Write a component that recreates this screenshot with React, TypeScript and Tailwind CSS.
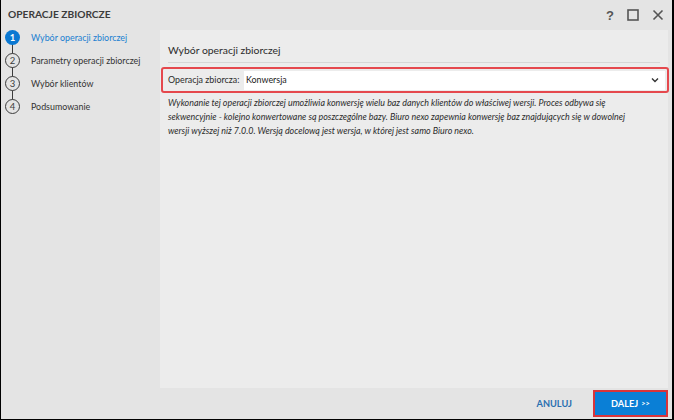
import React from "react";

const steps = [
  "Wybór operacji zbiorczej",
  "Parametry operacji zbiorczej",
  "Wybór klientów",
  "Podsumowanie",
];

function StepCircle({ n, active }: { n: number; active: boolean }) {
  return (
    <div
      className={`relative z-10 flex h-[15px] w-[15px] shrink-0 items-center justify-center rounded-full text-[9.5px] leading-none ${
        active
          ? "bg-[#0a78d2] font-bold text-white"
          : "border border-[#3c3c3c] bg-[#e4e4e4] text-[#3c3c3c]"
      }`}
    >
      {n}
    </div>
  );
}

export default function App() {
  return (
    <div
      className="flex h-[420px] w-[674px] flex-col border-b border-l border-r-2 border-black bg-[#e4e4e4] text-[#2b2b2b]"
      style={{ fontFamily: 'Lato, "Noto Sans", sans-serif' }}
    >
      {/* title bar */}
      <div className="flex h-[30px] shrink-0 items-center pl-[7px] pr-[8px]">
        <h1 className="flex-1 text-[10.2px] font-bold text-[#3c3c3c]">OPERACJE ZBIORCZE</h1>
        <div className="flex items-center gap-[13px] text-[#555]">
          <span
            className="text-[13px] font-semibold leading-none"
            style={{ fontFamily: '"Liberation Sans", sans-serif' }}
          >
            ?
          </span>
          <svg width="12" height="12" viewBox="0 0 12 12">
            <rect x="1" y="1" width="10" height="10" fill="none" stroke="#555" strokeWidth="1.6" />
          </svg>
          <svg width="12" height="12" viewBox="0 0 12 12">
            <path d="M1.5 1.5 10.5 10.5M10.5 1.5 1.5 10.5" stroke="#555" strokeWidth="1.6" />
          </svg>
        </div>
      </div>

      <div className="flex min-h-0 flex-1">
        {/* steps */}
        <div className="w-[159px] shrink-0 pl-[4px]">
          <div className="relative flex flex-col gap-[8px]">
            <div className="absolute bottom-[7px] left-[7px] top-[7px] w-px bg-[#3c3c3c]" />
            {steps.map((s, i) => (
              <div key={s} className="flex h-[15px] items-center gap-[11px]">
                <StepCircle n={i + 1} active={i === 0} />
                <span
                  className={`whitespace-nowrap text-[8.9px] ${
                    i === 0 ? "text-[#1a7fd1]" : "text-[#333]"
                  }`}
                >
                  {s}
                </span>
              </div>
            ))}
          </div>
        </div>

        {/* content */}
        <div className="mr-[4px] min-w-0 flex-1 bg-[#ececec] px-[8px] pt-[13px]">
          <h2 className="border-b border-[#d6d6d6] pb-[5px] text-[10.4px] leading-[14px] text-[#2b2b2b]">
            Wybór operacji zbiorczej
          </h2>
          <div className="-ml-[7px] -mr-[9px] mt-[4px] flex h-[26px] items-center rounded-[3px] border-2 border-[#e5484d] pl-[5px] pr-[2px]">
            <span className="w-[76px] shrink-0 whitespace-nowrap text-[8.9px]">Operacja zbiorcza:</span>
            <div className="flex h-[19px] flex-1 items-center justify-between bg-white pl-[2px] pr-[6px]">
              <span className="text-[8.9px] text-[#222]">Konwersja</span>
              <svg width="8" height="6" viewBox="0 0 8 6">
                <path d="M1 1.5 4 4.5 7 1.5" fill="none" stroke="#333" strokeWidth="1.4" />
              </svg>
            </div>
          </div>
          <p className="mt-[3px] whitespace-nowrap text-[8.9px] italic leading-[14px] text-[#2b2b2b]">
            Wykonanie tej operacji zbiorczej umożliwia konwersję wielu baz danych klientów do właściwej wersji. Proces odbywa się
            <br />
            sekwencyjnie - kolejno konwertowane są poszczególne bazy. Biuro nexo zapewnia konwersję baz znajdujących się w dowolnej
            <br />
            wersji wyższej niż 7.0.0. Wersją docelową jest wersja, w której jest samo Biuro nexo.
          </p>
        </div>
      </div>

      {/* footer */}
      <div className="flex h-[31px] shrink-0 items-center justify-end gap-[21px] pr-[4px]">
        <button className="text-[9.2px] font-bold text-[#2a6fb0]">ANULUJ</button>
        <button className="flex h-[27px] w-[75px] items-center justify-center border-2 border-[#d9343a] bg-[#0a7fd6] text-[9.2px] font-bold text-white">
          DALEJ <span className="ml-[3px] text-[7.5px]">&gt;&gt;</span>
        </button>
      </div>
    </div>
  );
}
